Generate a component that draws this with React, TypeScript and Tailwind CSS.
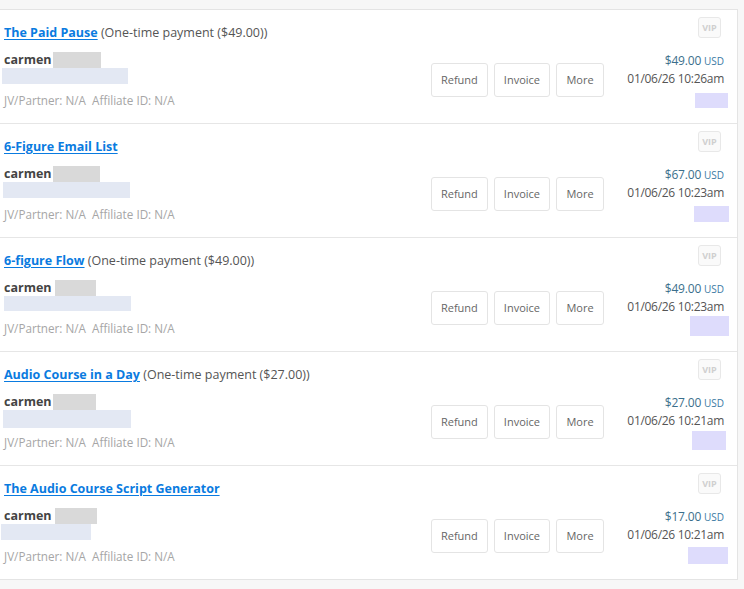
import React from "react";

type Sale = {
  title: string;
  note?: string;
  price: string;
  time: string;
  nameBox: { w: number; ml: number };
  email: { w: number; h: number; ml: number };
  tag: { w: number; h: number; mr: number };
};

const sales: Sale[] = [
  {
    title: "The Paid Pause",
    note: "(One-time payment ($49.00))",
    price: "$49.00",
    time: "01/06/26 10:26am",
    nameBox: { w: 48, ml: 1 },
    email: { w: 126, h: 16, ml: -2 },
    tag: { w: 33, h: 15, mr: 0 },
  },
  {
    title: "6-Figure Email List",
    price: "$67.00",
    time: "01/06/26 10:23am",
    nameBox: { w: 47, ml: 1 },
    email: { w: 127, h: 16, ml: -1 },
    tag: { w: 35, h: 16, mr: -1 },
  },
  {
    title: "6-figure Flow",
    note: "(One-time payment ($49.00))",
    price: "$49.00",
    time: "01/06/26 10:23am",
    nameBox: { w: 41, ml: 3 },
    email: { w: 127, h: 15, ml: 0 },
    tag: { w: 39, h: 20, mr: -1 },
  },
  {
    title: "Audio Course in a Day",
    note: "(One-time payment ($27.00))",
    price: "$27.00",
    time: "01/06/26 10:21am",
    nameBox: { w: 43, ml: 1 },
    email: { w: 128, h: 18, ml: -1 },
    tag: { w: 34, h: 19, mr: 2 },
  },
  {
    title: "The Audio Course Script Generator",
    price: "$17.00",
    time: "01/06/26 10:21am",
    nameBox: { w: 42, ml: 3 },
    email: { w: 90, h: 16, ml: -3 },
    tag: { w: 40, h: 17, mr: 0 },
  },
];

function SaleRow({ sale }: { sale: Sale }) {
  return (
    <div className="relative h-[114px] border-b border-[#e6e6e6] pl-[4px] pr-[9px] pt-[14px] last:h-[113px] last:border-b-0">
      <span className="absolute right-[16px] top-[7px] flex h-[21px] w-[23px] items-center justify-center rounded-[3px] border border-[#e8e8e8] bg-[#fafafa] text-[9px] font-bold text-[#cfcfcf]">
        VIP
      </span>

      <div className="h-[18px] text-[12.5px] leading-[18px] text-[#555]">
        <a href="#" className="font-bold text-[#0a7be0] underline underline-offset-2">
          {sale.title}
        </a>
        {sale.note && <span> {sale.note}</span>}
      </div>

      <div className="mt-[10px] flex h-[56px] items-center">
        <div className="flex h-full flex-1 flex-col">
          <div className="flex h-[16px] items-center">
            <span className="text-[12.5px] font-bold leading-[16px] text-[#444]">carmen</span>
            <span
              className="h-[16px] bg-[#d9d9d9]"
              style={{ width: sale.nameBox.w, marginLeft: sale.nameBox.ml }}
            />
          </div>
          <div
            className="bg-[#e3e8f3]"
            style={{ width: sale.email.w, height: sale.email.h, marginLeft: sale.email.ml }}
          />
          <div className="mt-auto text-[11.7px] leading-[16px] text-[#a6a6a6]">
            JV/Partner: N/A&nbsp;&nbsp;Affiliate ID: N/A
          </div>
        </div>

        <div className="flex gap-[6px]">
          {["Refund", "Invoice", "More"].map((label) => (
            <button
              key={label}
              className="h-[34px] min-w-[48px] rounded-[3px] border border-[#e4e4e4] bg-white px-[9px] text-[11px] text-[#666]"
            >
              {label}
            </button>
          ))}
        </div>

        <div className="flex h-full w-[124px] flex-col items-end">
          <div className="pr-[4px] text-[12px] leading-[18px] tracking-[-0.2px] text-[#3b6f8c]">
            {sale.price} <span className="text-[10px] tracking-normal text-[#3b7aa3]">USD</span>
          </div>
          <div className="pr-[4px] text-[12px] leading-[18px] tracking-[-0.3px] text-[#555]">
            {sale.time}
          </div>
          <div
            className="mt-auto bg-[#dedcfc]"
            style={{ width: sale.tag.w, height: sale.tag.h, marginRight: sale.tag.mr }}
          />
        </div>
      </div>
    </div>
  );
}

export default function App() {
  return (
    <div
      className="min-h-screen bg-[#f7f7f7] pr-[6px] pt-[9px]"
      style={{ fontFamily: '"Open Sans", "Noto Sans", sans-serif' }}
    >
      <div className="border border-l-0 border-[#e4e4e4] bg-white">
        {sales.map((sale) => (
          <SaleRow key={sale.title + sale.time} sale={sale} />
        ))}
      </div>
    </div>
  );
}
